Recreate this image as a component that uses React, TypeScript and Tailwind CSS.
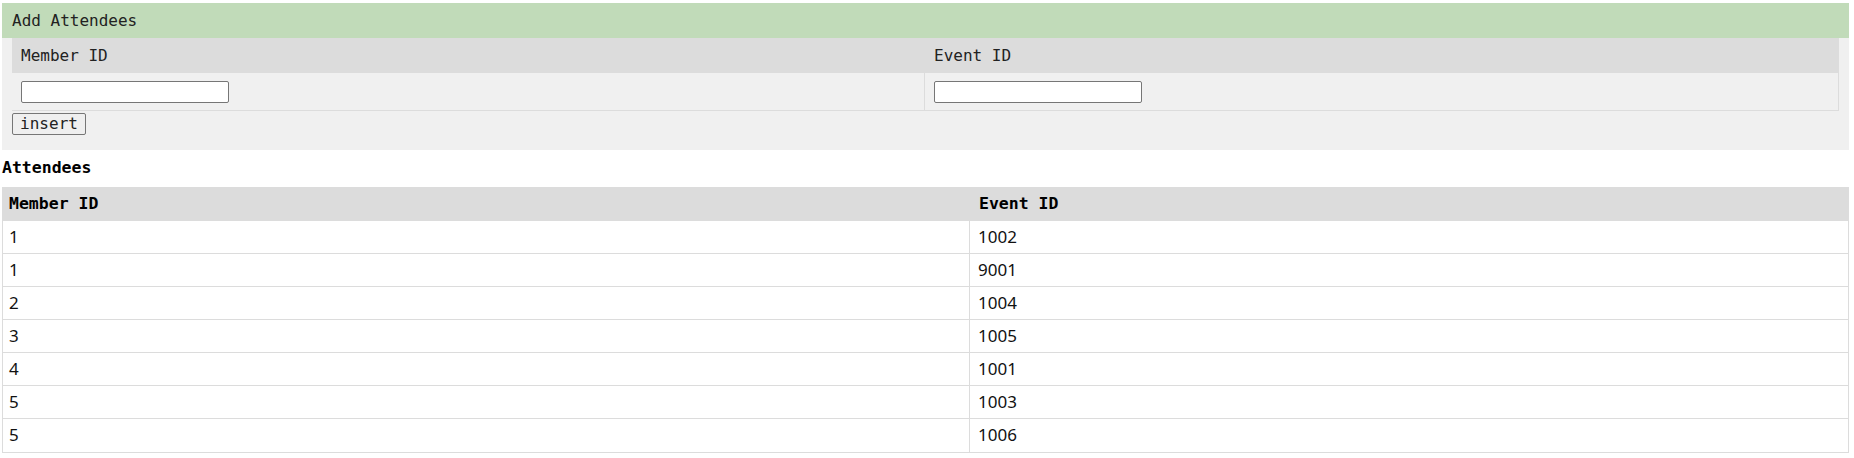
import React from 'react';

const rows: [string, string][] = [
  ['1', '1002'],
  ['1', '9001'],
  ['2', '1004'],
  ['3', '1005'],
  ['4', '1001'],
  ['5', '1003'],
  ['5', '1006'],
];

const mono = "font-['DejaVu_Sans_Mono',monospace]";

const App: React.FC = () => {
  return (
    <div className="ml-[2px] w-[1847px] pt-[3px] text-[#222]">
      {/* Add form */}
      <div className={`h-[35px] bg-[#c1dbb9] pl-[10px] text-[16px] leading-[36px] ${mono}`}>
        Add Attendees
      </div>
      <div className="h-[112px] bg-[#f0f0f0] pl-[10px]">
        <div className={`w-[1827px] border-r border-b border-[#dcdcdc] text-[16px] ${mono}`}>
          <div className="flex h-[35px] bg-[#dcdcdc] leading-[36px]">
            <div className="w-[913px] pl-[9px]">Member ID</div>
            <div className="flex-1 pl-[9px]">Event ID</div>
          </div>
          <div className="flex h-[37px] items-center">
            <div className="flex h-full w-[913px] items-center border-r border-[#dcdcdc] pl-[9px]">
              <input type="text" className="h-[22px] w-[208px] rounded-[2px] border border-[#767676] bg-white" />
            </div>
            <div className="flex h-full flex-1 items-center pl-[9px]">
              <input type="text" className="h-[22px] w-[208px] rounded-[2px] border border-[#767676] bg-white" />
            </div>
          </div>
        </div>
        <button
          className={`mt-px h-[22px] w-[74px] rounded-[2px] border border-[#767676] bg-[#efefef] text-[16px] leading-[20px] ${mono}`}
        >
          insert
        </button>
      </div>

      {/* List */}
      <div className={`h-[37px] pt-[8px] text-[16.5px] font-bold leading-[20px] text-black ${mono}`}>
        Attendees
      </div>
      <div className="border-x border-b border-[#dcdcdc] font-['Noto_Sans',sans-serif] text-[17px] text-[#111]">
        <div className={`flex h-[34px] bg-[#dcdcdc] font-bold leading-[33px] text-black ${mono} text-[16.5px]`}>
          <div className="w-[967px] pl-[6px]">Member ID</div>
          <div className="flex-1 pl-[9px]">Event ID</div>
        </div>
        {rows.map(([m, e], i) => (
          <div key={i} className={`flex h-[33px] leading-[31px] ${i < rows.length - 1 ? 'border-b border-[#dcdcdc]' : ''}`}>
            <div className="w-[967px] border-r border-[#dcdcdc] pl-[6px]">{m}</div>
            <div className="flex-1 pl-[8px]">{e}</div>
          </div>
        ))}
      </div>
    </div>
  );
};

export default App;
